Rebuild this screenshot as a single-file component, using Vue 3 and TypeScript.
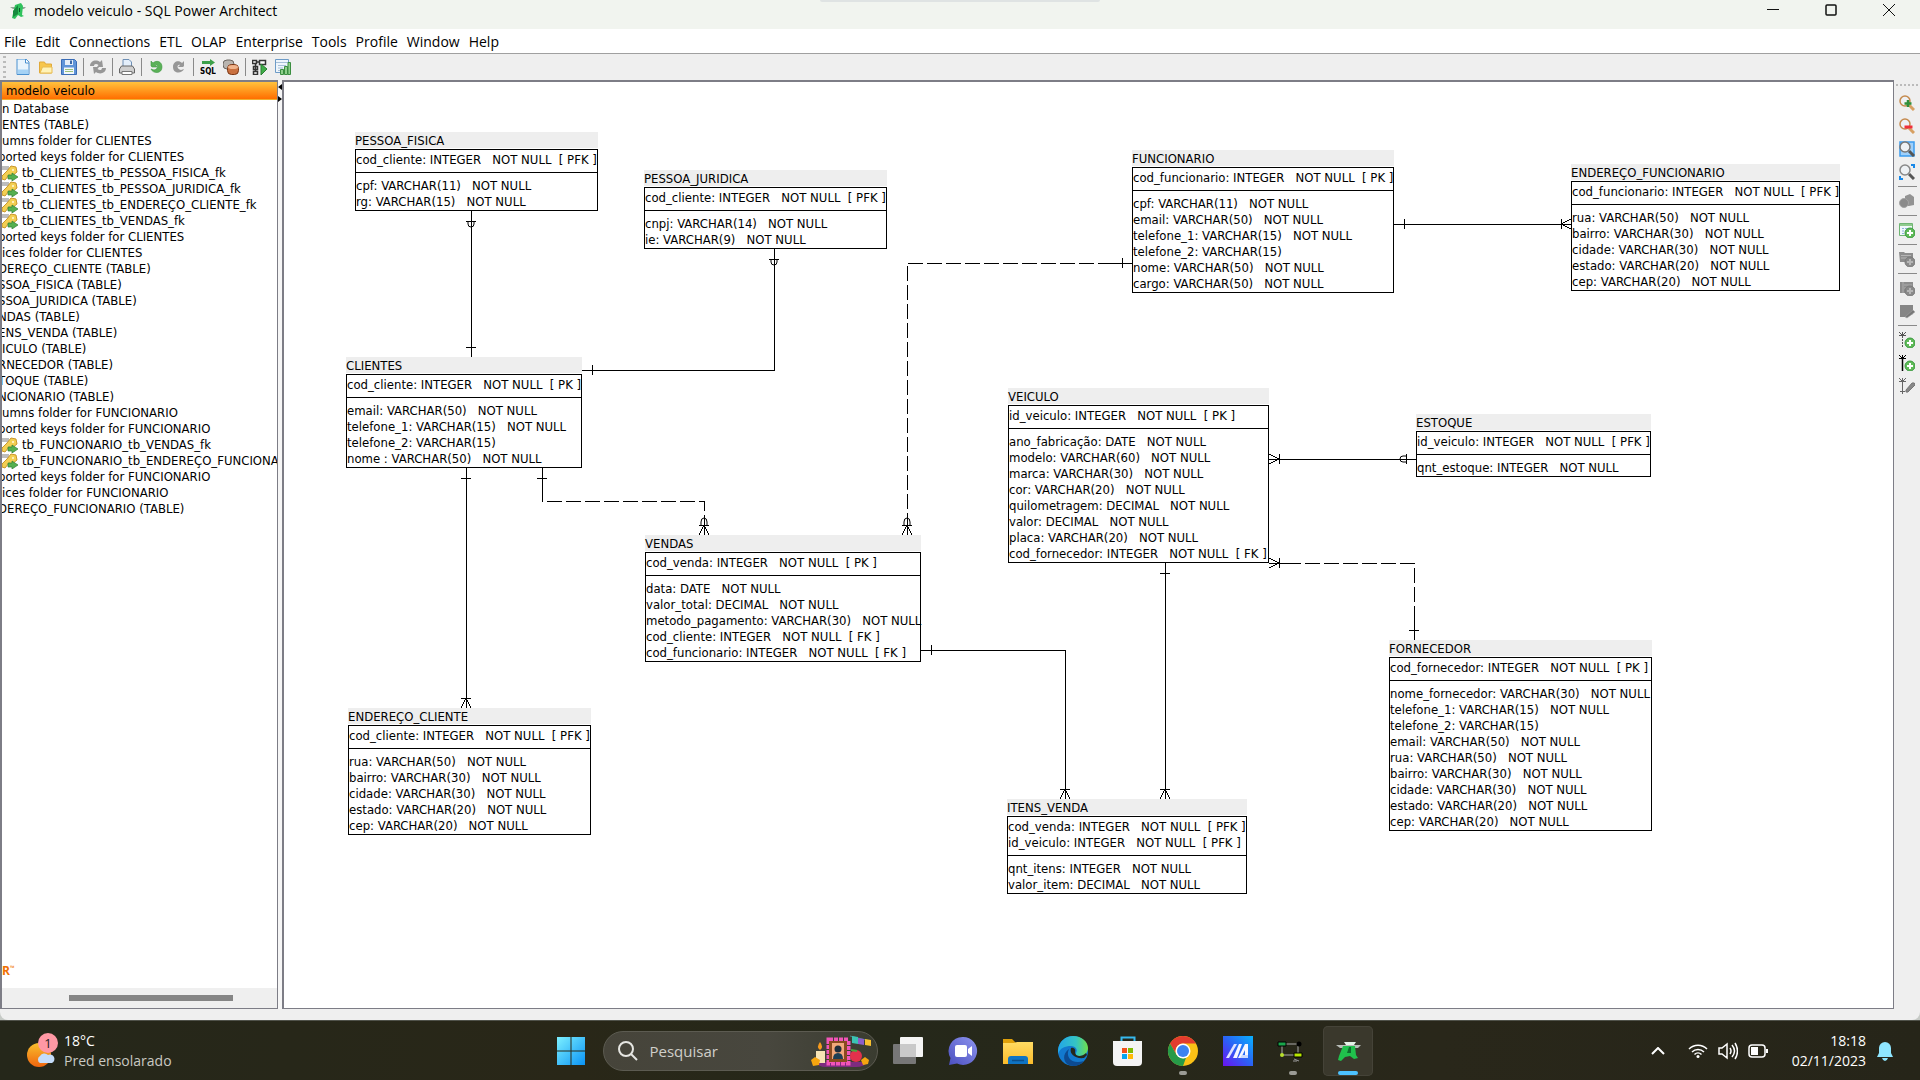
<script setup lang="ts">
interface Entity {
  name: string
  x: number
  y: number
  w: number
  keys: string[]
  cols: string[]
}
type EndKind = 'one' | 'many' | 'zeroOne' | 'zeroMany'
interface End {
  x: number
  y: number
  angle: number
  kind: EndKind
}
interface Relation {
  path: string
  dashed?: boolean
  ends: End[]
}
interface Tool {
  label: string
  icon: string
  sepAfter?: boolean
}

const menus = ['File', 'Edit', 'Connections', 'ETL', 'OLAP', 'Enterprise', 'Tools', 'Profile', 'Window', 'Help']

const NN = '   NOT NULL'

const entities: Entity[] = [
  { name: 'PESSOA_FISICA', x: 71, y: 50, w: 243, keys: [`cod_cliente: INTEGER${NN}  [ PFK ]`], cols: [`cpf: VARCHAR(11)${NN}`, `rg: VARCHAR(15)${NN}`] },
  { name: 'PESSOA_JURIDICA', x: 360, y: 88, w: 243, keys: [`cod_cliente: INTEGER${NN}  [ PFK ]`], cols: [`cnpj: VARCHAR(14)${NN}`, `ie: VARCHAR(9)${NN}`] },
  { name: 'CLIENTES', x: 62, y: 275, w: 236, keys: [`cod_cliente: INTEGER${NN}  [ PK ]`], cols: [`email: VARCHAR(50)${NN}`, `telefone_1: VARCHAR(15)${NN}`, 'telefone_2: VARCHAR(15)', `nome : VARCHAR(50)${NN}`] },
  { name: 'VENDAS', x: 361, y: 453, w: 276, keys: [`cod_venda: INTEGER${NN}  [ PK ]`], cols: [`data: DATE${NN}`, `valor_total: DECIMAL${NN}`, `metodo_pagamento: VARCHAR(30)${NN}`, `cod_cliente: INTEGER${NN}  [ FK ]`, `cod_funcionario: INTEGER${NN}  [ FK ]`] },
  { name: 'ENDEREÇO_CLIENTE', x: 64, y: 626, w: 243, keys: [`cod_cliente: INTEGER${NN}  [ PFK ]`], cols: [`rua: VARCHAR(50)${NN}`, `bairro: VARCHAR(30)${NN}`, `cidade: VARCHAR(30)${NN}`, `estado: VARCHAR(20)${NN}`, `cep: VARCHAR(20)${NN}`] },
  { name: 'FUNCIONARIO', x: 848, y: 68, w: 262, keys: [`cod_funcionario: INTEGER${NN}  [ PK ]`], cols: [`cpf: VARCHAR(11)${NN}`, `email: VARCHAR(50)${NN}`, `telefone_1: VARCHAR(15)${NN}`, 'telefone_2: VARCHAR(15)', `nome: VARCHAR(50)${NN}`, `cargo: VARCHAR(50)${NN}`] },
  { name: 'ENDEREÇO_FUNCIONARIO', x: 1287, y: 82, w: 269, keys: [`cod_funcionario: INTEGER${NN}  [ PFK ]`], cols: [`rua: VARCHAR(50)${NN}`, `bairro: VARCHAR(30)${NN}`, `cidade: VARCHAR(30)${NN}`, `estado: VARCHAR(20)${NN}`, `cep: VARCHAR(20)${NN}`] },
  { name: 'VEICULO', x: 724, y: 306, w: 261, keys: [`id_veiculo: INTEGER${NN}  [ PK ]`], cols: [`ano_fabricação: DATE${NN}`, `modelo: VARCHAR(60)${NN}`, `marca: VARCHAR(30)${NN}`, `cor: VARCHAR(20)${NN}`, `quilometragem: DECIMAL${NN}`, `valor: DECIMAL${NN}`, `placa: VARCHAR(20)${NN}`, `cod_fornecedor: INTEGER${NN}  [ FK ]`] },
  { name: 'ESTOQUE', x: 1132, y: 332, w: 235, keys: [`id_veiculo: INTEGER${NN}  [ PFK ]`], cols: [`qnt_estoque: INTEGER${NN}`] },
  { name: 'ITENS_VENDA', x: 723, y: 717, w: 240, keys: [`cod_venda: INTEGER${NN}  [ PFK ]`, `id_veiculo: INTEGER${NN}  [ PFK ]`], cols: [`qnt_itens: INTEGER${NN}`, `valor_item: DECIMAL${NN}`] },
  { name: 'FORNECEDOR', x: 1105, y: 558, w: 263, keys: [`cod_fornecedor: INTEGER${NN}  [ PK ]`], cols: [`nome_fornecedor: VARCHAR(30)${NN}`, `telefone_1: VARCHAR(15)${NN}`, 'telefone_2: VARCHAR(15)', `email: VARCHAR(50)${NN}`, `rua: VARCHAR(50)${NN}`, `bairro: VARCHAR(30)${NN}`, `cidade: VARCHAR(30)${NN}`, `estado: VARCHAR(20)${NN}`, `cep: VARCHAR(20)${NN}`] },
]

// Angle 0 leaves the table downwards, 90 to the left, 180 upwards, 270 to the right.
const relations: Relation[] = [
  { path: 'M187 129V275', ends: [{ x: 187, y: 129, angle: 0, kind: 'zeroOne' }, { x: 187, y: 275, angle: 180, kind: 'one' }] },
  { path: 'M490 167V288H298', ends: [{ x: 490, y: 167, angle: 0, kind: 'zeroOne' }, { x: 298, y: 288, angle: 270, kind: 'one' }] },
  { path: 'M182 386V626', ends: [{ x: 182, y: 386, angle: 0, kind: 'one' }, { x: 182, y: 626, angle: 180, kind: 'many' }] },
  { path: 'M258 386V419H420V453', dashed: true, ends: [{ x: 258, y: 386, angle: 0, kind: 'one' }, { x: 420, y: 453, angle: 180, kind: 'zeroMany' }] },
  { path: 'M848 181H623V453', dashed: true, ends: [{ x: 848, y: 181, angle: 90, kind: 'one' }, { x: 623, y: 453, angle: 180, kind: 'zeroMany' }] },
  { path: 'M1110 142H1287', ends: [{ x: 1110, y: 142, angle: 270, kind: 'one' }, { x: 1287, y: 142, angle: 90, kind: 'many' }] },
  { path: 'M985 377H1132', ends: [{ x: 985, y: 377, angle: 270, kind: 'many' }, { x: 1132, y: 377, angle: 90, kind: 'zeroOne' }] },
  { path: 'M1130 558V481H985', dashed: true, ends: [{ x: 1130, y: 558, angle: 180, kind: 'one' }, { x: 985, y: 481, angle: 270, kind: 'many' }] },
  { path: 'M881 481V717', ends: [{ x: 881, y: 481, angle: 0, kind: 'one' }, { x: 881, y: 717, angle: 180, kind: 'many' }] },
  { path: 'M637 568H781V717', ends: [{ x: 637, y: 568, angle: 270, kind: 'one' }, { x: 781, y: 717, angle: 180, kind: 'many' }] },
]

const endPaths: Record<EndKind, string> = {
  one: 'M0 0V20M-5 10H5',
  many: 'M0 0V20M-5 10H5M0 10L-5 0M0 10L5 0',
  zeroOne: 'M0 0V20M-5 10H5',
  zeroMany: 'M0 0V20M-5 10H5M0 10L-5 0M0 10L5 0',
}
const ringPaths: Partial<Record<EndKind, string>> = {
  zeroOne: 'M-3 10V13A3 3 0 0 0 3 13V10',
  zeroMany: 'M-3 10V13A3 4 0 0 0 3 13V10',
}

// The tree is scrolled sideways, so rows begin inside a word; "cut" rows begin inside a letter.
const tree: { text: string; key?: boolean; cut?: boolean }[] = [
  { text: 'n Database' },
  { text: 'ENTES (TABLE)' },
  { text: 'umns folder for CLIENTES' },
  { text: 'ported keys folder for CLIENTES', cut: true },
  { text: 'tb_CLIENTES_tb_PESSOA_FISICA_fk', key: true },
  { text: 'tb_CLIENTES_tb_PESSOA_JURIDICA_fk', key: true },
  { text: 'tb_CLIENTES_tb_ENDEREÇO_CLIENTE_fk', key: true },
  { text: 'tb_CLIENTES_tb_VENDAS_fk', key: true },
  { text: 'ported keys folder for CLIENTES', cut: true },
  { text: 'ices folder for CLIENTES' },
  { text: 'DEREÇO_CLIENTE (TABLE)', cut: true },
  { text: 'SSOA_FISICA (TABLE)', cut: true },
  { text: 'SSOA_JURIDICA (TABLE)', cut: true },
  { text: 'NDAS (TABLE)', cut: true },
  { text: 'ENS_VENDA (TABLE)', cut: true },
  { text: 'ICULO (TABLE)' },
  { text: 'RNECEDOR (TABLE)', cut: true },
  { text: 'TOQUE (TABLE)', cut: true },
  { text: 'NCIONARIO (TABLE)', cut: true },
  { text: 'umns folder for FUNCIONARIO' },
  { text: 'ported keys folder for FUNCIONARIO', cut: true },
  { text: 'tb_FUNCIONARIO_tb_VENDAS_fk', key: true },
  { text: 'tb_FUNCIONARIO_tb_ENDEREÇO_FUNCIONARIO_fk', key: true },
  { text: 'ported keys folder for FUNCIONARIO', cut: true },
  { text: 'ices folder for FUNCIONARIO' },
  { text: 'DEREÇO_FUNCIONARIO (TABLE)', cut: true },
]

const plus = '<circle cx="11" cy="11" r="5" fill="#5fbb58" stroke="#3b9a40"/><path d="M11 8v6M8 11h6" stroke="#fff" stroke-width="2"/>'
const plusGrey = '<circle cx="11" cy="11" r="5" fill="#8a8a8a" stroke="#7a7a7a"/><path d="M11 8v6M8 11h6" stroke="#b5b5b5" stroke-width="2"/>'
const lens = (rim: string, handle: string) =>
  `<path d="M10 10l5 5" stroke="${handle}" stroke-width="3"/><circle cx="6" cy="6" r="5" fill="#eef1f4" stroke="${rim}" stroke-width="1.5"/>`

const tools: Tool[] = [
  { label: 'New', icon: '<path d="M2 0h9l3 3v12.500H2z" fill="#e9f4fd" stroke="#4a90d0"/><path d="M3 10.500h10V15H3z" fill="#a5d2f5"/><path d="M10.500 0v4H14" fill="#fff" stroke="#4a90d0"/>' },
  { label: 'Open', icon: '<path d="M1.500 3h5l1 2h6v9h-12z" fill="#f7c64c" stroke="#e0a93a"/><path d="M4.500 8H14v6H2z" fill="#fff3b8" stroke="#e8bb50"/>' },
  { label: 'Save', sepAfter: true, icon: '<path d="M.5.5h13l2 2v13H.5z" fill="#5f94d8" stroke="#3a6cb5"/><path d="M4 1h8v5H4z" fill="#e5eef8"/><path d="M9 1.500h2V5H9z" fill="#3b68a8"/><path d="M3 8.500h10V15H3z" fill="#f3f7fb"/><path d="M4 10.500h8M4 12.500h8" stroke="#9cc27a"/>' },
  { label: 'Refresh', sepAfter: true, icon: '<path d="M0 7c0-5 6-7 10-4l2-2 1 7H7l1.500-2C6 4 4 5 4 7zM16 9c0 5-6 7-10 4l-2 2-1-7h6l-1.500 2c2.500 2 4.500 1 4.500-1z" fill="#979797"/>' },
  { label: 'Print', sepAfter: true, icon: '<path d="M4 7V.5h6L12.500 3v4" fill="#e4effb" stroke="#6e8fb5"/><path d="M2.500 7h11l2 3v4H.5v-4z" fill="#cfcfcf" stroke="#666"/><path d="M3 12.500h10v3H3z" fill="#fff" stroke="#777"/>' },
  { label: 'Undo', icon: '<path d="M3 2v5l1 1h5L7 6c3-1 4 4-1 5l-3-1c2 5 11 5 11-2 0-6-6-7-9-4z" fill="#5bb158" stroke="#3f9843" stroke-width=".6"/>' },
  { label: 'Redo', sepAfter: true, icon: '<path d="M13 2v5l-1 1H7l2-2c-3-1-4 4 1 5l3-1c-2 5-11 5-11-2 0-6 6-7 9-4z" fill="#979797"/>' },
  { label: 'Forward engineer SQL', icon: '<path d="M2 2h8V0l5 3.500L10 7V5H2z" fill="#3da049"/><text x="8" y="15" font-family="DejaVu Sans Condensed" font-size="8" font-weight="700" text-anchor="middle" fill="#000">SQL</text>' },
  { label: 'Compare data models', sepAfter: true, icon: '<rect x="0" y="1" width="11" height="9" rx="4" fill="#b9b5b0" stroke="#6b6661"/><rect x="4.500" y="5.500" width="11" height="10" rx="4" fill="#c9703f" stroke="#7a3615"/><ellipse cx="10" cy="8" rx="5" ry="2" fill="#f0b48c"/>' },
  { label: 'Auto layout', icon: '<path d="M.5 1.500h4v3h-4zM7.500 1.500h6v4h-6zM1.500 7.500h4v3h-4zM1.500 12.500h4v3h-4zM4.500 3h3M3.500 4.500v8" fill="#fff" stroke="#333" stroke-width="1.500"/><path d="M9 5l6 5-6 6z" fill="#3fae49" stroke="#2b7d33"/>' },
  { label: 'Profile', icon: '<path d="M.5.5h13v13H.5z" fill="#eef5fb" stroke="#6d9bc7"/><path d="M1 3.500h12M3 6.500h8M3 9h5M3 11.500h4" stroke="#a6bfd8"/><path d="M5.500 10.500h3v5h-3zM9.500 7.500h3v8h-3zM13 3.500h2.500v12H13z" fill="#8fd08c" stroke="#3b8e40"/>' },
]

const sideTools: Tool[] = [
  { label: 'Zoom in', icon: lens('#c58a4e', '#d7a062') + '<path d="M9 5v7M5.500 8.500h7" stroke="#2f8f3a" stroke-width="2.500"/>' },
  { label: 'Zoom out', icon: lens('#c58a4e', '#d7a062') + '<path d="M5.500 9h8" stroke="#f0303a" stroke-width="3"/>' },
  { label: 'Zoom all', icon: '<path d="M1 1h14v14H1z" fill="#9fd0fb" stroke="#3b9cf0" stroke-width="1.500"/>' + lens('#777', '#555') },
  { label: 'Zoom selected', sepAfter: true, icon: lens('#888', '#555') + '<path d="M12 1h3v3M1 12v3h3" fill="none" stroke="#1888e8" stroke-width="2"/>' },
  { label: 'New cube', sepAfter: true, icon: '<path d="M6 3l5-2 4 3v8l-5 1H6z" fill="#939393"/><circle cx="5" cy="10" r="4.500" fill="#8b8b8b" stroke="#a5a5a5"/>' },
  { label: 'New table', sepAfter: true, icon: '<path d="M.5 1.500h13v12H.5z" fill="#f2f8fc" stroke="#6fb573"/><path d="M1 3h12" stroke="#8fca8e" stroke-width="2"/><path d="M3 6.500h9M3 9h6M3 11.500h4" stroke="#8eb3dd" stroke-dasharray="2 1"/>' + plus },
  { label: 'New index', sepAfter: true, icon: '<path d="M0 1h5l1 1h8v9H1z" fill="#8d8d8d"/><path d="M2 4.500h10M2 7h6" stroke="#b5b5b5"/>' + plusGrey },
  { label: 'New column', icon: '<path d="M1 2h13v11H1z" fill="#8d8d8d"/><path d="M4 2v11M5 5h8M5 8h4" stroke="#adadad"/>' + plusGrey },
  { label: 'Edit column', sepAfter: true, icon: '<path d="M1 2h13v9l-6 3H1z" fill="#868686"/><path d="M6 14l8-7 2 2-8 6z" fill="#777" stroke="#a8a8a8" stroke-width=".5"/>' },
  { label: 'New non-identifying relationship', icon: '<path d="M0 3.500h7M3.500 3.500L0 0M3.500 3.500L7 0M3.500 0v3" stroke="#555"/><path d="M3.500 4v12" stroke="#555" stroke-dasharray="2 1"/>' + plus },
  { label: 'New identifying relationship', icon: '<path d="M0 3.500h7M3.500 3.500L0 0M3.500 3.500L7 0M3.500 0v3" stroke="#000"/><path d="M3.500 3v13" stroke="#000" stroke-width="1.500"/>' + plus },
  { label: 'Edit relationship', icon: '<path d="M0 3.500h7M3.500 3.500L0 0M3.500 3.500L7 0M3.500 0v16M1 13.500h5" stroke="#666"/><path d="M7 12l6-7q3-1 3 2l-7 7q-3 1-2-2z" fill="#888" stroke="#777"/>' },
]

const apps: { label: string; icon: string; running?: boolean; active?: boolean }[] = [
  { label: 'Visão de tarefas', icon: '<rect x="8" y="2" width="23" height="20" rx="1" fill="#f4f4f4"/><rect x="1" y="9" width="23" height="20" rx="1" fill="#777"/><path d="M8 9h16v13H8z" fill="#c9c9c9"/>' },
  { label: 'Chat', icon: '<path d="M16 2a14 14 0 1 1-6 26.600L2 30l1.500-7A14 14 0 0 1 16 2z" fill="url(#chatFill)"/><rect x="8" y="10" width="12" height="12" rx="2" fill="#fff"/><path d="M21 14l4-3v10l-4-3z" fill="#fff"/>' },
  { label: 'Explorador de Arquivos', icon: '<path d="M1 4h9l4 4h16v6H1z" fill="#dfa00a"/><path d="M1 8h11l3-1h16v22H1z" fill="url(#folderFill)"/><path d="M6 29v-5q0-3 3-3h14q3 0 3 3v5z" fill="#0f74c4"/><path d="M10 25.500h12" stroke="#0b4f8c" stroke-width="1.500"/>' },
  { label: 'Microsoft Edge', icon: '<circle cx="16" cy="16" r="15" fill="#1279cf"/><path d="M1 15C2 6 9 1 16 1c9 0 15 6 15 12 0 5-4 8-8 8-3 0-5-1-4-3 2-3 0-7-5-7-6 0-11 2-13 8z" fill="url(#edgeFill)"/><path d="M12 14c-4 8 3 16 15 12-4 5-10 6-15 4-6-3-7-11 0-16z" fill="#0c4a91"/><path d="M14 13c-2 6 4 11 13 10l3-3-1-2c-4 4-11 4-11-1 1-2-1-5-4-4z" fill="#26281b"/>' },
  { label: 'Microsoft Store', icon: '<path d="M9.500 7V2.500h13V7" fill="none" stroke="#36b9ee" stroke-width="2"/><path d="M1 6h29v21q0 4-4 4H5q-4 0-4-4z" fill="#f4f4f4"/><path d="M10 13h5v5h-5z" fill="#f1511b"/><path d="M16 13h5v5h-5z" fill="#80bc06"/><path d="M10 19h5v5h-5z" fill="#05a6f0"/><path d="M16 19h5v5h-5z" fill="#ffba08"/>' },
  { label: 'Google Chrome', running: true, icon: '<circle cx="16" cy="16" r="15" fill="#fbc116"/><path d="M3 8.500A15 15 0 0 1 29 8.500H16A7.500 7.500 0 0 0 9.500 19.700z" fill="#e33b2e"/><path d="M3 8.500l6.500 11.200L16 23.500l3-.8L16 31A15 15 0 0 1 3 8.500z" fill="#269a48"/><circle cx="16" cy="16" r="7.500" fill="#fff"/><circle cx="16" cy="16" r="6" fill="#3c82f0"/>' },
  { label: 'MyASUS', icon: '<path d="M1 1h30v30H1z" fill="url(#asusFill)"/><path d="M4 23L12 9h3L7 23z" fill="#dfe3ff"/><path d="M11 23L17 9h3l-5 14z" fill="#f6f7ff"/><path d="M16 23l7-14h3v14h-3v-8l-4 8z" fill="#f6f7ff"/><path d="M20 20h6v3h-8z" fill="#c9d8ff"/>' },
  { label: 'Circuito', running: true, icon: '<path d="M5 9h16v11H5z" fill="none" stroke="#aaa"/><path d="M1 7h8v4H1z" fill="#19a54a" stroke="#000"/><circle cx="22" cy="9" r="2.500" fill="#000"/><circle cx="5" cy="20" r="2" fill="#b8e02b"/><path d="M17 18h8v4h-8z" fill="#b8e800" stroke="#000"/><path d="M17 24l5 2M16 26h4" stroke="#999"/>' },
  { label: 'SQL Power Architect', active: true, icon: '<path d="M4 10h25l-3 3H8z" fill="#b8bdb8"/><path d="M12 7h12l-2 3h-8z" fill="#e6f3e8"/><path d="M11 11h12l1 9 2 3-4 1-4-3-5 1-4 4-3-1 1-4z" fill="#20c04c"/><path d="M15 18l2-6h2v6z" fill="#0d6b2c"/>' },
]
</script>

<template>
  <div class="desktop">
    <svg class="defs" width="0" height="0" aria-hidden="true">
      <defs>
        <linearGradient id="chatFill" x1="0" y1="1" x2="1" y2="0"><stop offset="0" stop-color="#4b4fc0" /><stop offset="1" stop-color="#8d94ee" /></linearGradient>
        <linearGradient id="folderFill" x1="0" y1="0" x2="0" y2="1"><stop offset="0" stop-color="#ffdb63" /><stop offset="1" stop-color="#fbbc2c" /></linearGradient>
        <linearGradient id="edgeFill"><stop offset="0" stop-color="#22a6e8" /><stop offset=".6" stop-color="#35c4c4" /><stop offset="1" stop-color="#6fe04a" /></linearGradient>
        <linearGradient id="asusFill" x1="0" y1="1" x2="1" y2="0"><stop offset="0" stop-color="#6a12f0" /><stop offset=".5" stop-color="#2b62f5" /><stop offset="1" stop-color="#08b2ff" /></linearGradient>
        <linearGradient id="winFill" x1="0" y1="0" x2="1" y2="1"><stop offset="0" stop-color="#7df0ff" /><stop offset="1" stop-color="#0a93f5" /></linearGradient>
        <linearGradient id="sunFill" x1="0" y1="0" x2="0" y2="1"><stop offset="0" stop-color="#f8be2d" /><stop offset="1" stop-color="#f0650e" /></linearGradient>
      </defs>
    </svg>

    <div class="window">
      <header class="titlebar">
        <svg class="app-icon" width="16" height="16" viewBox="0 0 16 16">
          <path d="M0 4h16l-2 2H3z" fill="#8fa396" />
          <path d="M5 2l6-2 2 3-1 9 2 1-3 1-3-2-3 4-3-1z" fill="#2fc25c" />
          <path d="M3 8l5-6v9l-5 3z" fill="#178a3e" />
          <path d="M9 5h1v4H9z" fill="#0b5a26" />
        </svg>
        <h1>modelo veiculo - SQL Power Architect</h1>
        <div class="window-buttons">
          <button type="button" aria-label="Minimizar"><svg width="12" height="12" viewBox="0 0 12 12"><path d="M0 5.500h12" stroke="#111" /></svg></button>
          <button type="button" aria-label="Maximizar"><svg width="12" height="12" viewBox="0 0 12 12"><rect x="1" y="1" width="10" height="10" rx="1" fill="none" stroke="#111" stroke-width="1.500" /></svg></button>
          <button type="button" aria-label="Fechar"><svg width="12" height="12" viewBox="0 0 12 12"><path d="M0 0l12 12M12 0L0 12" stroke="#111" /></svg></button>
        </div>
        <div class="snap-tab"></div>
      </header>

      <nav class="menubar">
        <button v-for="m in menus" :key="m" type="button">{{ m }}</button>
      </nav>

      <div class="toolbar">
        <span class="grip"></span>
        <template v-for="t in tools" :key="t.label">
          <button type="button" :aria-label="t.label"><svg width="16" height="16" viewBox="0 0 16 16" v-html="t.icon"></svg></button>
          <span v-if="t.sepAfter" class="sep"></span>
        </template>
      </div>

      <main class="work">
        <aside class="tree-pane">
          <div class="tree-head">modelo veiculo</div>
          <ul class="tree">
            <li v-for="(row, i) in tree" :key="i" :class="{ cut: row.cut }">
              <svg v-if="row.key" width="16" height="16" viewBox="0 0 16 16">
                <path d="M0 1h7v4H0z" fill="#bdbdbd" />
                <path d="M9 1l5 1 1 5-5 4-3-1-4 5-3-1v-3l5-5z" fill="#f3cf52" stroke="#c9962a" />
                <circle cx="11" cy="5" r="1" fill="#fff8da" />
                <path d="M6 10h4V8l6 4-6 4v-2H6z" fill="#55b04f" stroke="#2f7f33" stroke-width=".7" />
              </svg>
              <span>{{ row.text }}</span>
            </li>
          </ul>
          <div class="brand">R<sup>™</sup></div>
          <div class="scrollbar"><div class="thumb"></div></div>
        </aside>

        <div class="splitter">
          <svg width="4" height="18" viewBox="0 0 4 18"><path d="M4 0v6L0 3zM0 12v6l4-3z" fill="#000" /></svg>
        </div>

        <section class="canvas">
          <svg class="links" width="100%" height="100%">
            <g v-for="(r, i) in relations" :key="i" fill="none" stroke="#000">
              <path :d="r.path" shape-rendering="crispEdges" :stroke-dasharray="r.dashed ? '15 4' : undefined" />
              <g v-for="(e, j) in r.ends" :key="j" :transform="`translate(${e.x} ${e.y}) rotate(${e.angle})`">
                <path :d="endPaths[e.kind]" shape-rendering="crispEdges" />
                <path v-if="ringPaths[e.kind]" :d="ringPaths[e.kind]" />
              </g>
            </g>
          </svg>
          <article v-for="e in entities" :key="e.name" class="entity" :style="{ left: e.x + 'px', top: e.y + 'px', width: e.w + 'px' }">
            <h2>{{ e.name }}</h2>
            <div class="box">
              <ul class="keys"><li v-for="k in e.keys" :key="k">{{ k }}</li></ul>
              <ul class="cols"><li v-for="c in e.cols" :key="c">{{ c }}</li></ul>
            </div>
          </article>
        </section>

        <div class="side-tools">
          <span class="grip"></span>
          <template v-for="t in sideTools" :key="t.label">
            <button type="button" :aria-label="t.label"><svg width="16" height="16" viewBox="0 0 16 16" fill="none" v-html="t.icon"></svg></button>
            <span v-if="t.sepAfter" class="sep"></span>
          </template>
        </div>
      </main>
    </div>

    <footer class="taskbar">
      <button class="weather" type="button">
        <svg width="32" height="36" viewBox="0 0 32 36">
          <circle cx="13" cy="22" r="12" fill="url(#sunFill)" />
          <path d="M14 30a4 4 0 0 1 0-7 5 5 0 0 1 8-1 4 4 0 0 1 4 8z" fill="#c5dcfa" />
          <circle cx="22" cy="10" r="10" fill="#ff98a4" />
          <text x="22" y="15" font-family="Open Sans" font-size="13" text-anchor="middle" fill="#222">1</text>
        </svg>
        <span><b>18°C</b><br />Pred ensolarado</span>
      </button>

      <div class="apps">
        <button class="app" type="button" aria-label="Iniciar">
          <svg width="30" height="30" viewBox="0 0 30 30"><path d="M1 1h13.500v13.500H1zM15.500 1H29v13.500H15.500zM1 15.500h13.500V29H1zM15.500 15.500H29V29H15.500z" fill="url(#winFill)" /></svg>
        </button>
        <label class="search">
          <svg width="20" height="20" viewBox="0 0 20 20"><circle cx="8" cy="8" r="7" fill="none" stroke="#e6e6e2" stroke-width="2" /><path d="M13 13l6 6" stroke="#e6e6e2" stroke-width="2" /></svg>
          <input type="text" placeholder="Pesquisar" aria-label="Pesquisar" />
          <svg width="62" height="34" viewBox="0 0 62 34">
            <path d="M6 28h52q-4 5-12 5H16q-8 0-10-5z" fill="#7d2c80" />
            <path d="M6 17h9v12H6z" fill="#f6e3b4" /><path d="M10 8q4 5 0 8-4-3 0-8z" fill="#f79a1c" />
            <path d="M1 26l4-3 5 3-1 5-6 1z" fill="#f5a50f" />
            <path d="M19 6h19v23H19z" fill="none" stroke="#f254b8" stroke-width="5" stroke-dasharray="4 1" />
            <path d="M19 7h18v21H19z" fill="#8a4a20" /><path d="M22 9h12v16H22z" fill="#f2a77a" />
            <circle cx="28" cy="15" r="3.500" fill="#1f2d3c" /><path d="M23 25q0-6 5-6t5 6z" fill="#1f3f55" />
            <path d="M40 2l20 5" stroke="#4a8b8a" /><path d="M42 2l6 1v7l-6-1z" fill="#3ac4b4" /><path d="M48 4l6 1v6l-6-1z" fill="#8d5dc7" /><path d="M55 5l6 1v6l-6-1z" fill="#f7c02e" />
            <circle cx="46" cy="22" r="6" fill="#e2314c" /><path d="M41 16l6 1" stroke="#4aa53c" stroke-width="2" />
            <path d="M51 26l4-3 4 3-1 4-5 1z" fill="#f5a50f" />
          </svg>
        </label>
        <button v-for="a in apps" :key="a.label" class="app" :class="{ running: a.running, active: a.active }" type="button" :aria-label="a.label">
          <svg width="32" height="32" viewBox="0 0 32 32" v-html="a.icon"></svg>
        </button>
      </div>

      <div class="tray">
        <button type="button" aria-label="Ícones ocultos"><svg width="14" height="8" viewBox="0 0 14 8"><path d="M1 7l6-6 6 6" fill="none" stroke="#fff" stroke-width="2" /></svg></button>
        <button class="status" type="button" aria-label="Rede, som e bateria">
          <svg width="20" height="16" viewBox="0 0 20 16" fill="none" stroke="#fff" stroke-width="1.500"><path d="M1 6a12.500 12.500 0 0 1 18 0M4 9a8.500 8.500 0 0 1 12 0M6.500 11.500a5 5 0 0 1 7 0" /><circle cx="10" cy="13.500" r="1.500" fill="#fff" stroke="none" /></svg>
          <svg width="20" height="18" viewBox="0 0 20 18" fill="none" stroke="#fff" stroke-width="1.500"><path d="M1 6h3l5-4v14l-5-4H1zM12 6q2 3 0 6M14 3q5 6 0 12M17 1q5 8 0 16" /></svg>
          <svg width="20" height="14" viewBox="0 0 20 14"><rect x="1" y="1" width="16" height="12" rx="3" fill="none" stroke="#fff" stroke-width="1.500" /><path d="M3 3h7v8H3zM18 5h2v4h-2z" fill="#fff" /></svg>
        </button>
        <button class="clock" type="button">18:18<br />02/11/2023</button>
        <button type="button" aria-label="Notificações"><svg width="16" height="20" viewBox="0 0 16 20"><path d="M8 1a6 6 0 0 1 6 6v5l2 4H0l2-4V7a6 6 0 0 1 6-6zM5 17h6q-1 3-3 3t-3-3z" fill="#8fe6ff" /></svg></button>
      </div>
    </footer>
  </div>
</template>

<style>
body {
  margin: 0;
  overflow: hidden;
}
</style>

<style scoped>
.desktop {
  display: flex;
  flex-direction: column;
  height: 100vh;
  background: #c6cac6;
  font-family: "Open Sans", "Noto Sans", sans-serif;
  color: #000;
}
.defs {
  position: absolute;
}
button {
  border: 0;
  padding: 0;
  background: none;
  font: inherit;
  color: inherit;
}
svg {
  display: block;
  flex: none;
}
ul,
h1,
h2 {
  margin: 0;
  padding: 0;
  font-weight: 400;
  list-style: none;
}
.window {
  flex: 1;
  min-height: 0;
  display: flex;
  flex-direction: column;
  background: #efefef;
  border-radius: 0 0 8px 8px;
  overflow: hidden;
}
.titlebar {
  position: relative;
  display: flex;
  align-items: flex-start;
  gap: 8px;
  height: 29px;
  padding-left: 10px;
  background: #f1f4ef;
}
.titlebar h1 {
  flex: 1;
  font-size: 14px;
  line-height: 22px;
}
.app-icon {
  margin-top: 3px;
}
.window-buttons {
  display: flex;
  padding-right: 2px;
}
.window-buttons button {
  display: grid;
  place-items: center;
  width: 58px;
  height: 20px;
}
.snap-tab {
  position: absolute;
  top: 0;
  left: 820px;
  width: 280px;
  height: 2px;
  border-radius: 0 0 4px 4px;
  background: #dfe3e3;
}
.menubar {
  display: flex;
  gap: 9px;
  height: 24px;
  padding-left: 4px;
  background: #fff;
  border-bottom: 1px solid #a0a0a0;
  font-size: 14px;
  line-height: 25px;
}
.toolbar {
  display: flex;
  align-items: center;
  height: 26px;
  padding-left: 3px;
}
.toolbar .grip {
  width: 3px;
  height: 23px;
  margin-right: 5px;
  background: repeating-linear-gradient(#bbb 0 2px, transparent 2px 5px);
}
.toolbar button,
.side-tools button {
  display: grid;
  place-items: center;
  width: 23px;
  height: 23px;
}
.toolbar .sep {
  width: 1px;
  height: 18px;
  margin: 0 2px 0 3px;
  background: #8a8a8a;
}
.work {
  flex: 1;
  min-height: 0;
  display: flex;
  padding-bottom: 11px;
  font-family: "DejaVu Sans Condensed", "DejaVu Sans", "Noto Sans", sans-serif;
  font-size: 13px;
  line-height: 16px;
}
.tree-pane {
  display: flex;
  flex-direction: column;
  width: 275px;
  background: #fff;
  border: 1px solid #7d7d86;
  border-width: 2px 1px 1px 2px;
  overflow: hidden;
}
.tree-head {
  padding-left: 4px;
  background: linear-gradient(#ffc23c, #ff6e00);
  border-bottom: 1px solid #f0b030;
  line-height: 17px;
}
.tree {
  flex: 1;
  padding-top: 1px;
}
.tree li {
  display: flex;
  gap: 4px;
  height: 16px;
  white-space: nowrap;
}
.tree li.cut {
  text-indent: -4px;
}
.brand {
  height: 30px;
  color: #f07000;
  font: 700 12px/20px "Open Sans", sans-serif;
}
.brand sup {
  font-size: 6px;
}
.scrollbar {
  display: flex;
  height: 20px;
  padding-left: 67px;
  background: #efefef;
}
.thumb {
  width: 164px;
  height: 6px;
  margin-top: 7px;
  background: #858585;
}
.splitter {
  width: 4px;
  padding-top: 4px;
  background: #f6f6f6;
}
.canvas {
  position: relative;
  flex: 1;
  min-width: 0;
  background: #fff;
  border: 1px solid #7d7d86;
  border-width: 2px 1px 1px 2px;
  overflow: hidden;
}
.links {
  position: absolute;
  inset: 0;
}
.entity {
  position: absolute;
}
.entity h2 {
  height: 16px;
  margin-bottom: 1px;
  background: #eee;
  font-size: 13px;
  line-height: 18px;
}
.box {
  border: 1px solid #000;
  background: #fff;
}
.box li {
  height: 16px;
  white-space: pre;
}
.keys {
  padding: 2px 0 4px;
  border-bottom: 1px solid #000;
}
.cols {
  padding-top: 5px;
}
.side-tools {
  display: flex;
  flex-direction: column;
  align-items: center;
  width: 26px;
  padding-top: 4px;
}
.side-tools .grip {
  width: 22px;
  height: 2px;
  margin-bottom: 5px;
  background: repeating-linear-gradient(90deg, #bbb 0 2px, transparent 2px 4px);
}
.side-tools .sep {
  width: 19px;
  height: 1px;
  margin: 3px 0 2px;
  background: #8a8a8a;
}
.taskbar {
  display: grid;
  grid-template-columns: 1fr auto 1fr;
  align-items: center;
  height: 59px;
  border-top: 1px solid #50524a;
  background: linear-gradient(90deg, #25271a, #292718 30%, #25281a 45%, #29271a 75%, #262519);
  color: #fff;
  font-size: 14px;
  line-height: 20px;
}
.weather {
  display: flex;
  align-items: center;
  justify-self: start;
  gap: 6px;
  padding-left: 26px;
  text-align: left;
  color: #c9c9c2;
}
.weather b {
  font-weight: 400;
  color: #fff;
}
.apps {
  display: flex;
  align-items: center;
  gap: 5px;
  padding-right: 2px;
}
.app {
  position: relative;
  display: grid;
  place-items: center;
  width: 50px;
  height: 50px;
  border-radius: 5px;
}
.app.active {
  background: #3a382c;
  box-shadow: inset 0 0 0 1px #454338;
}
.app.running::after,
.app.active::after {
  content: "";
  position: absolute;
  bottom: 1px;
  left: 21px;
  width: 8px;
  height: 4px;
  border-radius: 2px;
  background: #9b9b95;
}
.app.active::after {
  left: 15px;
  width: 20px;
  background: #4cc2ff;
}
.search {
  display: flex;
  align-items: center;
  box-sizing: border-box;
  width: 275px;
  height: 40px;
  margin-left: 2px;
  padding: 0 5px 0 14px;
  border: 1px solid #5c5b51;
  border-radius: 20px;
  background: linear-gradient(90deg, #46443a, #48473e 60%, #3a3c30);
}
.search input {
  flex: 1;
  min-width: 0;
  margin-left: 12px;
  padding: 0;
  border: 0;
  outline: 0;
  background: none;
  color: #fff;
  font: 15px/20px "Open Sans", sans-serif;
}
.search input::placeholder {
  color: #d0cfca;
  opacity: 1;
}
.tray {
  display: flex;
  align-items: center;
  justify-self: end;
  padding-right: 27px;
}
.status {
  display: flex;
  align-items: center;
  gap: 10px;
  margin: 0 24px 0 23px;
}
.clock {
  margin-right: 11px;
  text-align: right;
}
</style>
